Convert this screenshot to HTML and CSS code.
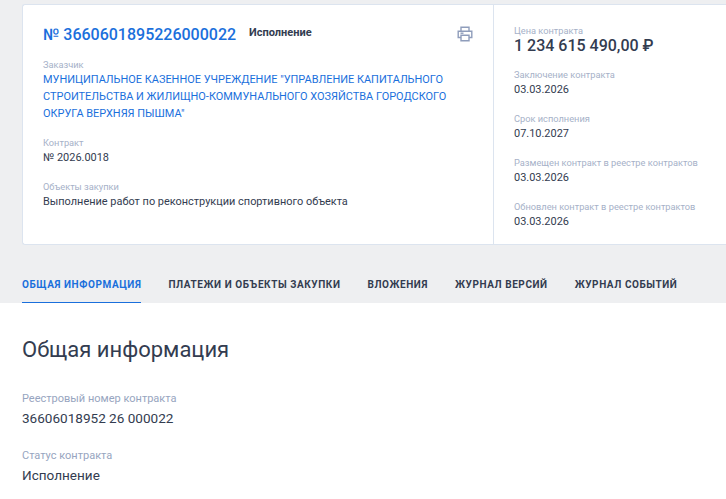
FILE: index.html
```html
<!DOCTYPE html>
<html lang="ru">
<head>
<meta charset="utf-8">
<title>Контракт</title>
<link rel="stylesheet" href="styles.css">
</head>
<body>
<div class="top">
  <div class="card">
    <div class="main">
      <div class="head">
        <a class="num">№ 3660601895226000022</a>
        <span class="status">Исполнение</span>
        <svg class="print" width="16" height="16" viewBox="0 0 16 16" fill="none" stroke="#8f9dbb" stroke-width="1.4">
          <path d="M4 5V1.2h8V5"/>
          <path d="M4 11.5H1.2V5.2h13.6v6.3H12"/>
          <path d="M4 9.2h8v5.6H4z"/>
          <path d="M3.5 7.2h3"/>
        </svg>
      </div>
      <div class="lbl cust-l">Заказчик</div>
      <a class="cust">МУНИЦИПАЛЬНОЕ КАЗЕННОЕ УЧРЕЖДЕНИЕ "УПРАВЛЕНИЕ КАПИТАЛЬНОГО СТРОИТЕЛЬСТВА И ЖИЛИЩНО-КОММУНАЛЬНОГО ХОЗЯЙСТВА ГОРОДСКОГО ОКРУГА ВЕРХНЯЯ ПЫШМА"</a>
      <div class="lbl sec">Контракт</div>
      <div class="val">№ 2026.0018</div>
      <div class="lbl sec">Объекты закупки</div>
      <div class="val">Выполнение работ по реконструкции спортивного объекта</div>
    </div>
    <div class="side">
      <div class="lbl">Цена контракта</div>
      <div class="price">1 234 615 490,00 ₽</div>
      <div class="lbl s2">Заключение контракта</div>
      <div class="val">03.03.2026</div>
      <div class="lbl s2">Срок исполнения</div>
      <div class="val">07.10.2027</div>
      <div class="lbl s2">Размещен контракт в реестре контрактов</div>
      <div class="val">03.03.2026</div>
      <div class="lbl s2">Обновлен контракт в реестре контрактов</div>
      <div class="val">03.03.2026</div>
    </div>
  </div>
  <nav class="tabs">
    <a class="tab active">ОБЩАЯ ИНФОРМАЦИЯ</a>
    <a class="tab">ПЛАТЕЖИ И ОБЪЕКТЫ ЗАКУПКИ</a>
    <a class="tab">ВЛОЖЕНИЯ</a>
    <a class="tab">ЖУРНАЛ ВЕРСИЙ</a>
    <a class="tab">ЖУРНАЛ СОБЫТИЙ</a>
  </nav>
</div>
<main class="content">
  <h1>Общая информация</h1>
  <div class="f-l first">Реестровый номер контракта</div>
  <div class="f-v">36606018952 26 000022</div>
  <div class="f-l">Статус контракта</div>
  <div class="f-v">Исполнение</div>
</main>
</body>
</html>
```
FILE: styles.css
```css
* { box-sizing: border-box; }
html, body { margin: 0; height: 100%; overflow: hidden; }
body { background: #fff; font-family: Roboto, "Liberation Sans", sans-serif; color: #333c50; }
.top { background: #eeeff1; height: 303px; padding: 4px 0 0 22px; }
.card { display: flex; height: 241px; width: 720px; background: #fff; border: 1px solid #dce4ef; border-right: 0; border-radius: 3px 0 0 3px; }
.main { width: 471px; padding: 20px 20px 0 20px; border-right: 1px solid #dce4ef; }
.head { display: flex; align-items: flex-start; height: 25px; position: relative; }
.num { font-size: 16px; font-weight: 500; line-height: 20px; color: #1a6fdc; }
.status { font-size: 11px; font-weight: 700; line-height: 14px; margin: 1px 0 0 13px; color: #333c50; }
.print { position: absolute; left: 414px; top: 1px; }
.lbl { font-size: 9.25px; line-height: 12px; color: #a6b1c8; }
.cust-l { margin-top: 9px; }
.cust { display: block; font-size: 10.95px; line-height: 17px; color: #1a6fdc; width: 410px; }
.sec { margin-top: 15px; }
.val { font-size: 10.95px; line-height: 16px; color: #333c50; margin-top: 1px; }
.side { flex: 1; padding: 20px 0 0 20px; }
.price { font-size: 16px; font-weight: 500; line-height: 20px; color: #333c50; margin-top: -1px; }
.s2 { margin-top: 15px; }
.price + .s2 { margin-top: 13px; }
.tabs { display: flex; gap: 27px; margin-top: 24px; height: 34px; }
.tab { font-size: 10px; font-weight: 700; letter-spacing: 0.575px; line-height: 31px; color: #333c50; height: 34px; white-space: nowrap; }
.active { color: #1a6fdc; border-bottom: 1px solid #1a6fdc; }
.content { padding: 34px 0 0 22px; }
h1 { margin: 0; font-size: 22px; font-weight: 400; line-height: 26px; color: #333c50; }
.f-l { font-size: 11px; line-height: 14px; color: #97a5c0; margin-top: 22px; }
.first { margin-top: 29px; }
.f-v { font-size: 13.55px; line-height: 18px; color: #333c50; margin-top: 3px; }
```
